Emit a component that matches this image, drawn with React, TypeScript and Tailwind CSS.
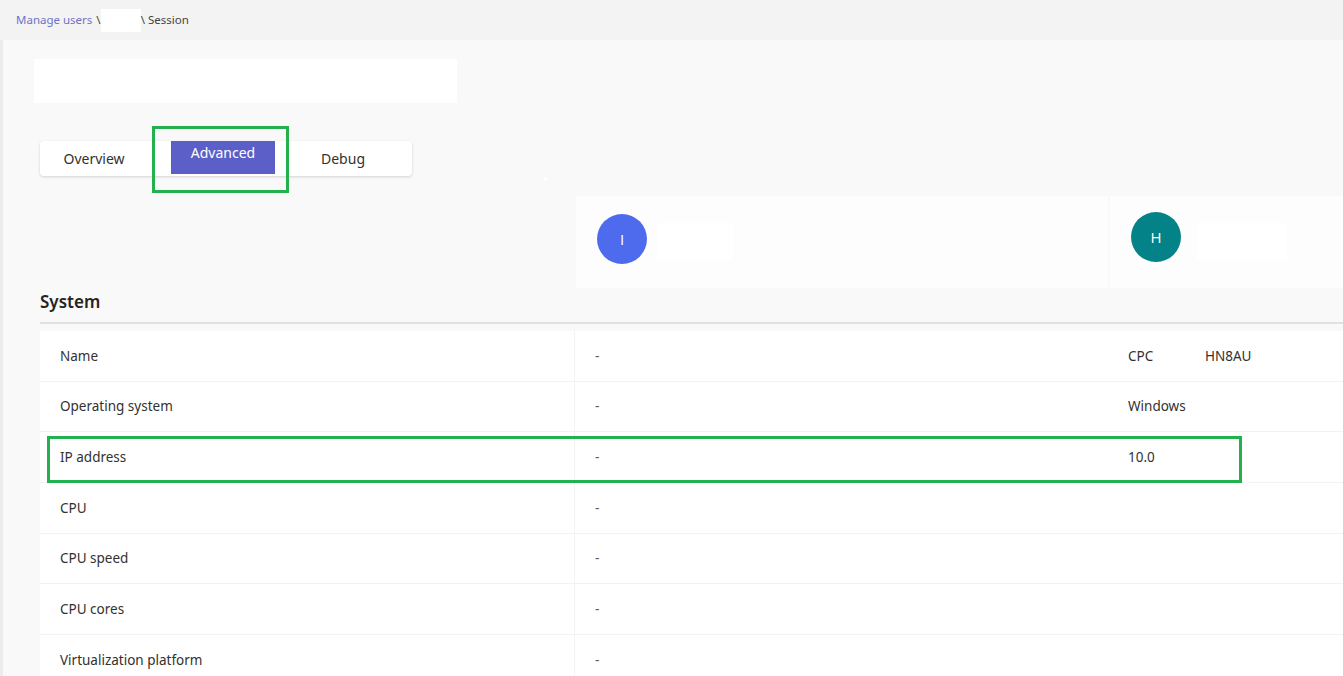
import React from 'react';

type Row = { label: string; first: string; second: React.ReactNode };

const rows: Row[] = [
  {
    label: 'Name',
    first: '-',
    second: (
      <span className="flex">
        <span className="w-[77px]">CPC</span>
        <span>HN8AU</span>
      </span>
    ),
  },
  { label: 'Operating system', first: '-', second: 'Windows' },
  { label: 'IP address', first: '-', second: '10.0' },
  { label: 'CPU', first: '-', second: '' },
  { label: 'CPU speed', first: '-', second: '' },
  { label: 'CPU cores', first: '-', second: '' },
  { label: 'Virtualization platform', first: '-', second: '' },
];

const Avatar = ({ letter, color }: { letter: string; color: string }) => (
  <div
    className={`w-[50px] h-[50px] rounded-full flex items-center justify-center text-white text-[15px] font-['Open_Sans',sans-serif] ${color}`}
  >
    {letter}
  </div>
);

const App = () => {
  return (
    <div className="relative w-full h-[676px] overflow-hidden bg-[#f9f9f9] text-[#323130] font-['Segoe_UI','Noto_Sans',sans-serif]">
      {/* breadcrumb */}
      <div className="h-10 bg-[#f3f3f3] flex items-center pl-4 text-[11.5px]">
        <span className="text-[#6f72c9]">Manage users</span>
        <span className="ml-1 text-[#444]">\</span>
        <span className="w-[40px] h-[23px] bg-white" />
        <span className="text-[#444]">\ Session</span>
      </div>

      <div className="border-l-[3px] border-[#ececec] h-full">
        <div className="pl-[31px] pt-[19px]">
          <div className="w-[423px] h-[44px] bg-white" />
        </div>

        {/* tabs */}
        <div className="ml-[37px] mt-[38px] w-[372px] h-[35px] bg-white rounded shadow-[0_1px_3px_rgba(0,0,0,0.16)] flex text-[14px]">
          <button className="w-[108px] h-full flex items-center justify-center text-[#323130]">Overview</button>
          <button className="ml-[23px] w-[104px] h-[33px] bg-[#5b5fc7] text-white flex justify-center pt-[1px]">Advanced</button>
          <button className="ml-[25px] w-[86px] h-full flex items-center justify-center text-[#323130]">Debug</button>
        </div>

        {/* people header */}
        <div className="mt-[20px] ml-[37px] grid grid-cols-[534px_532px_1fr] gap-x-[2px] h-[92px]">
          <div />
          <div className="bg-[#fdfdfd] flex items-center pl-[21px] pb-[6px]">
            <Avatar letter="I" color="bg-[#4f6bed]" />
            <div className="ml-[10px] mt-[4px] w-[76px] h-[36px] bg-white" />
          </div>
          <div className="bg-[#fdfdfd] flex items-center pl-[21px] pb-[10px]">
            <Avatar letter="H" color="bg-[#038387]" />
            <div className="ml-[16px] mt-[8px] w-[90px] h-[36px] bg-white" />
          </div>
        </div>

        {/* system section */}
        <div className="ml-[37px]">
          <div className="h-[36px] flex items-center pb-[6px] border-b-2 border-[#e1e1e1] text-[17px] font-semibold text-[#252423]">
            System
          </div>
          <div className="mt-[7px] bg-white">
            {rows.map((row) => (
              <div
                key={row.label}
                className="grid grid-cols-[535px_534px_1fr] h-[50.7px] border-b border-[#f2f2f2] text-[13.5px] items-stretch"
              >
                <div className="pl-5 flex items-center border-r border-[#f3f3f3]">{row.label}</div>
                <div className="pl-5 flex items-center text-[#605e5c]">{row.first}</div>
                <div className="pl-[19px] flex items-center">{row.second}</div>
              </div>
            ))}
          </div>
        </div>
      </div>

      {/* green highlight boxes */}
      <div className="absolute left-[152px] top-[126px] w-[137px] h-[67px] border-[3px] border-[#22b14c]" />
      <div className="absolute left-[47px] top-[436px] w-[1195px] h-[47px] border-[3px] border-[#22b14c]" />
      <div className="absolute left-[544px] top-[177px] w-[3px] h-[3px] bg-white" />
    </div>
  );
};

export default App;
